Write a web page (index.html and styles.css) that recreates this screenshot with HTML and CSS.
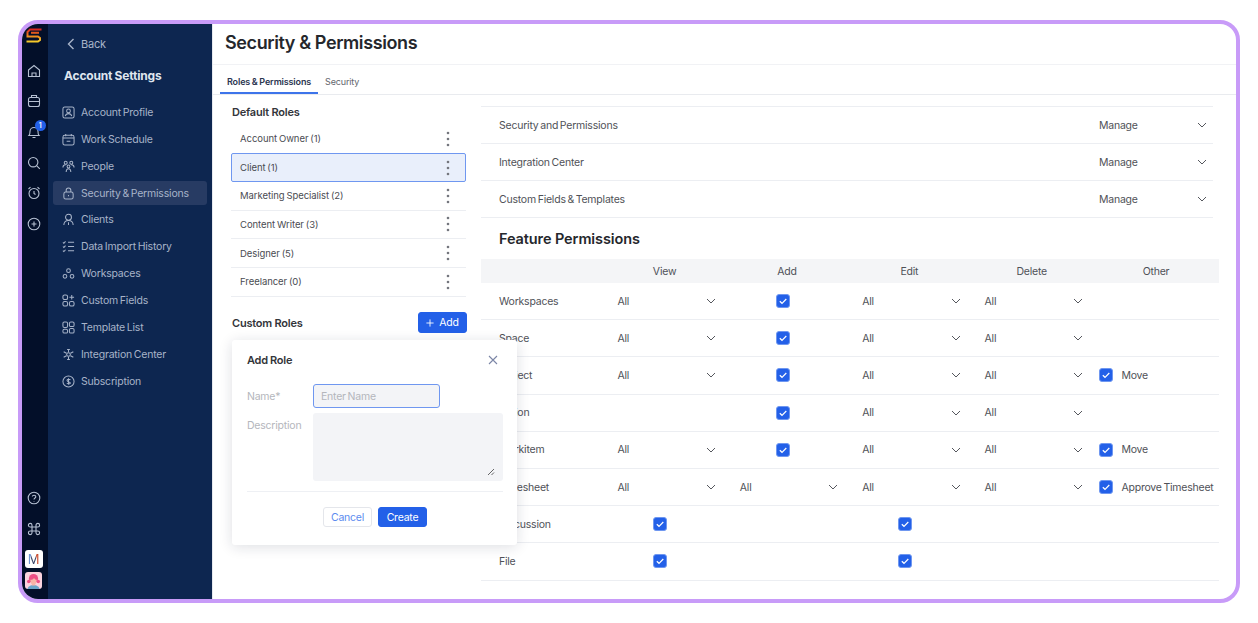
FILE: index.html
```html
<!DOCTYPE html>
<html lang="en">
<head>
<meta charset="utf-8">
<title>Security &amp; Permissions</title>
<link rel="stylesheet" href="styles.css">
</head>
<body>
<svg class="defs" width="0" height="0" aria-hidden="true">
  <defs><linearGradient id="lg" x1="0" y1="0" x2="0" y2="1"><stop offset="0" stop-color="#d8291f"/><stop offset=".55" stop-color="#ee8a1c"/><stop offset="1" stop-color="#f5c92a"/></linearGradient></defs>
  <symbol id="chev" viewBox="0 0 10 10"><path d="M1 3l4 4 4-4" fill="none" stroke="currentColor" stroke-width="1"/></symbol>
  <symbol id="check" viewBox="0 0 14 14"><rect x=".5" y=".5" width="13" height="13" rx="2.5" fill="#2360e8" stroke="#6f97f0"/><path d="M3.8 7.2l2.2 2.1 4.3-4.3" fill="none" stroke="#fff" stroke-width="1.2"/></symbol>
  <symbol id="dots" viewBox="0 0 4 16"><circle cx="2" cy="2" r="1.300"/><circle cx="2" cy="8" r="1.300"/><circle cx="2" cy="14" r="1.300"/></symbol>
</svg>
<div class="frame">
  <aside class="rail">
    <svg class="logo" viewBox="0 0 16 15" width="16" height="15"><path d="M15.500 1.500H4L1.500 4v4.500H12l2 1.500v2l-2 1.500H.5M13 4.800H5" fill="none" stroke="url(#lg)" stroke-width="2"/></svg>
    <svg class="ri" viewBox="0 0 14 14"><path d="M1.500 6L7 1.500 12.500 6v6.500h-11zM5 12.500V9h4v3.500"/></svg>
    <svg class="ri" viewBox="0 0 14 14"><rect x="1.500" y="3.500" width="11" height="9" rx="2"/><path d="M4.500 3.500V1.500h5v2M1.500 7.500h11"/></svg>
    <div class="bell-wrap">
      <svg class="ri" viewBox="0 0 14 14"><path d="M2 10.500c1-1 1-2 1-4a4 4 0 018 0c0 2 0 3 1 4zM5.500 12.500h3"/></svg>
      <span class="badge">1</span>
    </div>
    <svg class="ri" viewBox="0 0 14 14"><circle cx="6.200" cy="6.200" r="4.700"/><path d="M9.800 9.800l3 3"/></svg>
    <svg class="ri" viewBox="0 0 14 14"><circle cx="7" cy="7.500" r="5"/><path d="M7 5v2.500l1.500 1M1.500 3L3.500 1.200M12.500 3l-2-1.800"/></svg>
    <svg class="ri" viewBox="0 0 14 14"><circle cx="7" cy="7" r="5.800"/><path d="M7 4.500v5M4.500 7h5"/></svg>
    <svg class="ri rail-low" viewBox="0 0 14 14"><circle cx="7" cy="7" r="5.800"/><path d="M5.300 5.500C5.500 3.900 8.800 3.900 8.800 5.700 8.800 7 7 7 7 8.500M7 10v.6"/></svg>
    <svg class="ri" viewBox="0 0 14 14"><path d="M5 5h4v4H5zM5 5H3.200A1.800 1.800 0 115 3.200zM9 5V3.200A1.800 1.800 0 1110.800 5zM9 9h1.800A1.800 1.800 0 119 10.800zM5 9v1.800A1.800 1.800 0 113.200 9z"/></svg>
    <div class="org"><span class="m1">M</span></div>
    <div class="avatar"><svg viewBox="0 0 17 17" width="17" height="17"><rect width="17" height="17" fill="#fbd3de"/><path d="M2.500 17c.5-3 3.500-4 6-4s5.500 1 6 4z" fill="#6aa5c9"/><circle cx="8.500" cy="6.500" r="4.600" fill="#ee4f86"/><rect x="6.800" y="10" width="3.400" height="3.500" fill="#f7b5a8"/><circle cx="8.500" cy="9" r="3.200" fill="#f7b5a8"/><path d="M5.200 7.800c1.500 0 3.300-.5 3.800-1.800.5 .8 1.500 1.800 2.800 1.800V4.500H5.200z" fill="#ee4f86"/><circle cx="3.700" cy="9.500" r="1.700" fill="#ee4f86"/><circle cx="13.300" cy="9.500" r="1.700" fill="#ee4f86"/></svg></div>
  </aside>

  <nav class="side">
    <div class="back"><svg viewBox="0 0 8 12" width="8" height="12"><path d="M6.500 1L1.500 6l5 5" fill="none" stroke="currentColor" stroke-width="1.400"/></svg>Back</div>
    <div class="side-title">Account Settings</div>
    <ul class="menu">
      <li class="mi"><svg class="mic" viewBox="0 0 14 14"><rect x="1" y="1" width="12" height="12" rx="2"/><circle cx="7" cy="5.300" r="2"/><path d="M3.500 11c.5-2 2-2.800 3.500-2.800s3 .8 3.500 2.800"/></svg>Account Profile</li>
      <li class="mi"><svg class="mic" viewBox="0 0 14 14"><rect x="1" y="2.500" width="12" height="10.500" rx="2"/><path d="M1 5.500h12M4 1v2.500M10 1v2.500M5 9h4"/></svg>Work Schedule</li>
      <li class="mi"><svg class="mic" viewBox="0 0 14 14"><circle cx="4" cy="3" r="1.600"/><circle cx="10" cy="3" r="1.600"/><circle cx="7" cy="7" r="1.500"/><path d="M1 8c0-2 1-3 3-3M13 8c0-2-1-3-3-3M4.500 13c0-2.500 1-3.700 2.500-3.700S9.500 10.500 9.500 13"/></svg>People</li>
      <li class="mi active"><svg class="mic" viewBox="0 0 14 14"><rect x="2" y="5.500" width="10" height="7.500" rx="2"/><path d="M4.500 5.500V3.500a2.500 2.500 0 015 0v2M7 8.500v1.500"/></svg>Security &amp; Permissions</li>
      <li class="mi"><svg class="mic" viewBox="0 0 14 14"><circle cx="7" cy="4.500" r="3.200"/><path d="M2 13c0-3.500 2-5 5-5s5 1.500 5 5M7 10v3"/></svg>Clients</li>
      <li class="mi"><svg class="mic" viewBox="0 0 14 14"><path d="M1 2.500l1 1 1.800-2M1 7l1 1 1.800-2M1 11.500l1 1 1.800-2M6.500 2.500H13M6.500 7H13M6.500 11.500H13"/></svg>Data Import History</li>
      <li class="mi"><svg class="mic" viewBox="0 0 14 14"><circle cx="7" cy="4" r="2"/><circle cx="3.200" cy="10" r="2"/><circle cx="10.800" cy="10" r="2"/></svg>Workspaces</li>
      <li class="mi"><svg class="mic" viewBox="0 0 14 14"><rect x="1" y="1" width="5" height="5" rx="1.800"/><rect x="1" y="8" width="5" height="5" rx="1.800"/><rect x="8" y="8" width="5" height="5" rx="1.800"/><path d="M10.500 1v5M8 3.500h5"/></svg>Custom Fields</li>
      <li class="mi"><svg class="mic" viewBox="0 0 14 14"><rect x="1" y="1" width="5" height="6" rx="1.500"/><rect x="8" y="1" width="5" height="5" rx="1.500"/><rect x="1" y="9" width="5" height="4" rx="1.500"/><rect x="8" y="8" width="5" height="5" rx="1.500"/></svg>Template List</li>
      <li class="mi"><svg class="mic" viewBox="0 0 14 14"><circle cx="7" cy="7" r="2"/><path d="M7 1v3.500M7 9.500V13M1.800 4l3 1.700M9.200 8.300l3 1.700M1.800 10l3-1.700M9.200 5.700l3-1.700M5.500 1.500h3M5.500 12.500h3"/></svg>Integration Center</li>
      <li class="mi"><svg class="mic" viewBox="0 0 14 14"><circle cx="7" cy="7" r="6"/><path d="M9 5.300C8.400 4.300 5.400 4.300 5.400 6S9 7.500 9 8.700 6 10 5.200 8.700M7 3.500v7"/></svg>Subscription</li>
    </ul>
  </nav>

  <main class="main">
    <header class="head"><h1>Security &amp; Permissions</h1></header>
    <div class="tabs">
      <span class="tab on">Roles &amp; Permissions</span>
      <span class="tab">Security</span>
    </div>
    <div class="body">
      <section class="roles">
        <h2 class="rh">Default Roles</h2>
        <ul class="rlist">
          <li class="role nol">Account Owner (1)<svg class="dots"><use href="#dots"/></svg></li>
          <li class="role sel-role">Client (1)<svg class="dots"><use href="#dots"/></svg></li>
          <li class="role">Marketing Specialist (2)<svg class="dots"><use href="#dots"/></svg></li>
          <li class="role">Content Writer (3)<svg class="dots"><use href="#dots"/></svg></li>
          <li class="role">Designer (5)<svg class="dots"><use href="#dots"/></svg></li>
          <li class="role">Freelancer (0)<svg class="dots"><use href="#dots"/></svg></li>
        </ul>
        <div class="custom">
          <h2 class="rh2">Custom Roles</h2>
          <button class="add"><svg viewBox="0 0 10 10" width="8" height="8"><path d="M5 .5v9M.5 5h9" stroke="#fff" stroke-width="1.100"/></svg>Add</button>
        </div>
      </section>
      <section class="perms">
        <div class="acc first"><span>Security and Permissions</span><span class="mg">Manage</span><svg class="ch"><use href="#chev"/></svg></div>
        <div class="acc"><span>Integration Center</span><span class="mg">Manage</span><svg class="ch"><use href="#chev"/></svg></div>
        <div class="acc"><span>Custom Fields &amp; Templates</span><span class="mg">Manage</span><svg class="ch"><use href="#chev"/></svg></div>
        <h2 class="fp">Feature Permissions</h2>
        <div class="table">
          <div class="thead"><span></span><span>View</span><span>Add</span><span>Edit</span><span>Delete</span><span>Other</span></div>
          <div class="tr"><span class="lbl">Workspaces</span><span class="s">All<svg class="ch"><use href="#chev"/></svg></span><span class="c"><svg class="cb"><use href="#check"/></svg></span><span class="s">All<svg class="ch"><use href="#chev"/></svg></span><span class="s">All<svg class="ch"><use href="#chev"/></svg></span><span></span></div>
          <div class="tr"><span class="lbl">Space</span><span class="s">All<svg class="ch"><use href="#chev"/></svg></span><span class="c"><svg class="cb"><use href="#check"/></svg></span><span class="s">All<svg class="ch"><use href="#chev"/></svg></span><span class="s">All<svg class="ch"><use href="#chev"/></svg></span><span></span></div>
          <div class="tr"><span class="lbl">Project</span><span class="s">All<svg class="ch"><use href="#chev"/></svg></span><span class="c"><svg class="cb"><use href="#check"/></svg></span><span class="s">All<svg class="ch"><use href="#chev"/></svg></span><span class="s">All<svg class="ch"><use href="#chev"/></svg></span><span class="o"><svg class="cb"><use href="#check"/></svg>Move</span></div>
          <div class="tr"><span class="lbl">Action</span><span></span><span class="c"><svg class="cb"><use href="#check"/></svg></span><span class="s">All<svg class="ch"><use href="#chev"/></svg></span><span class="s">All<svg class="ch"><use href="#chev"/></svg></span><span></span></div>
          <div class="tr"><span class="lbl">Workitem</span><span class="s">All<svg class="ch"><use href="#chev"/></svg></span><span class="c"><svg class="cb"><use href="#check"/></svg></span><span class="s">All<svg class="ch"><use href="#chev"/></svg></span><span class="s">All<svg class="ch"><use href="#chev"/></svg></span><span class="o"><svg class="cb"><use href="#check"/></svg>Move</span></div>
          <div class="tr"><span class="lbl">Timesheet</span><span class="s">All<svg class="ch"><use href="#chev"/></svg></span><span class="s">All<svg class="ch"><use href="#chev"/></svg></span><span class="s">All<svg class="ch"><use href="#chev"/></svg></span><span class="s">All<svg class="ch"><use href="#chev"/></svg></span><span class="o"><svg class="cb"><use href="#check"/></svg>Approve Timesheet</span></div>
          <div class="tr"><span class="lbl">Discussion</span><span class="c"><svg class="cb"><use href="#check"/></svg></span><span></span><span class="c"><svg class="cb"><use href="#check"/></svg></span><span></span><span></span></div>
          <div class="tr"><span class="lbl">File</span><span class="c"><svg class="cb"><use href="#check"/></svg></span><span></span><span class="c"><svg class="cb"><use href="#check"/></svg></span><span></span><span></span></div>
        </div>
      </section>
      <div class="modal">
        <div class="m-head"><span class="m-title">Add Role</span><svg class="x" viewBox="0 0 10 10" width="10" height="10"><path d="M1 1l8 8M9 1l-8 8" stroke="#7b86a6" stroke-width="1.100"/></svg></div>
        <div class="field"><label class="fl">Name*</label><div class="inp">Enter Name</div></div>
        <div class="field"><label class="fl">Description</label><div class="ta"><svg viewBox="0 0 8 8" width="8" height="8"><path d="M1 7l6-6M4.500 7L7 4.500" stroke="#555" stroke-width=".9"/></svg></div></div>
        <div class="m-foot"><button class="cancel">Cancel</button><button class="create">Create</button></div>
      </div>
    </div>
  </main>
</div>
</body>
</html>
```
FILE: styles.css
```css
* { box-sizing: border-box; }
html, body { margin: 0; height: 100%; overflow: hidden; background: #fff; }
body { font-family: "Inter", "Liberation Sans", sans-serif; font-size: 10.5px; color: #4f5157; letter-spacing: -0.22px; word-spacing: -1px; }
ul { list-style: none; margin: 0; padding: 0; }
h1, h2 { margin: 0; }
button { font-family: inherit; letter-spacing: inherit; cursor: pointer; }
.defs { position: absolute; }

.frame { display: flex; width: 1222px; height: 583px; margin: 20px 0 0 18px; border: 4px solid #c89bf8; border-radius: 20px; overflow: hidden; background: #fff; }

.rail { width: 26px; flex: none; background: #030f29; display: flex; flex-direction: column; align-items: center; padding: 4px 3px 10px 0; gap: 16.700px; }
.logo { margin-bottom: 4px; flex: none; }
.ri { width: 14px; height: 14px; display: block; flex: none; fill: none; stroke: #b6c0d2; stroke-width: 1.100; }
.rail-low { margin-top: auto; }
.bell-wrap { position: relative; height: 14px; }
.badge { position: absolute; top: -5px; left: 8px; width: 11px; height: 11px; border-radius: 50%; background: #2360e8; color: #fff; font-size: 7px; line-height: 11px; text-align: center; font-weight: 600; }
.org { width: 18px; height: 18px; flex: none; background: #fff; border-radius: 3px; display: flex; align-items: center; justify-content: center; margin-top: -2.700px; margin-bottom: -12.700px; }
.m1 { font-size: 13px; line-height: 1; font-weight: 400; color: transparent; background: linear-gradient(90deg, #6f95d2 0 25%, #3b4668 25% 72%, #c9492c 72%); -webkit-background-clip: text; background-clip: text; }
.avatar { width: 17px; height: 17px; flex: none; border-radius: 3px; overflow: hidden; }
.avatar svg { display: block; }

.side { width: 164px; flex: none; background: #0d2650; color: #a8b4c9; padding-top: 12px; }
.back { display: flex; align-items: center; gap: 6px; height: 16px; padding-left: 19px; font-size: 11px; }
.side-title { margin-top: 16px; height: 16px; line-height: 16px; padding-left: 16px; font-size: 12px; font-weight: 700; color: #dfe5ee; letter-spacing: -0.17px; word-spacing: -0.5px; }
.menu { margin-top: 16.400px; display: flex; flex-direction: column; gap: 2.900px; }
.mi { margin: 0 5px; height: 24px; border-radius: 3px; display: flex; align-items: center; gap: 6px; padding-left: 9px; font-size: 10.500px; letter-spacing: -0.2px; }
.mi.active { background: #273b63; }
.mic { width: 13px; height: 13px; flex: none; fill: none; stroke: #a8b4c9; stroke-width: 1.100; }

.main { flex: 1; min-width: 0; display: flex; flex-direction: column; border-left: 1px solid #e6e9ef; }
.head { height: 41px; flex: none; padding: 0 12px 4px; display: flex; align-items: center; border-bottom: 1px solid #f1f2f5; }
h1 { font-size: 18px; font-weight: 600; color: #25272c; letter-spacing: -0.4px; word-spacing: 0; }
.tabs { height: 30px; flex: none; border-bottom: 1px solid #e9ebef; display: flex; gap: 7px; padding-left: 7px; font-size: 9px; letter-spacing: -0.15px; word-spacing: -0.4px; }
.tab { height: 29px; line-height: 34px; color: #63666d; }
.tab.on { color: #2b3550; font-weight: 600; padding: 0 7px; border-bottom: 2px solid #3d74ea; }

.body { position: relative; flex: 1; min-height: 0; display: flex; padding-left: 18px; gap: 15px; }
.roles { width: 235px; flex: none; }
.rh { font-size: 11px; font-weight: 600; color: #33353a; height: 29.500px; line-height: 35px; padding-left: 1px; word-spacing: 0; }
.role { height: 28.700px; display: flex; align-items: center; justify-content: space-between; padding: 0 16px 0 9px; border-bottom: 1px solid #eceef2; font-size: 9.500px; color: #4a4c52; letter-spacing: -0.05px; word-spacing: -0.8px; }
.nol { border-bottom: 0; }
.sel-role { background: #e9effb; border: 1px solid #6f97f0; border-radius: 2px; padding-left: 8px; padding-right: 15px; }
.dots { width: 4px; height: 16px; fill: #74767d; flex: none; }
.custom { margin-top: 15.500px; display: flex; align-items: center; justify-content: space-between; padding-left: 1px; }
.rh2 { font-size: 11px; font-weight: 600; color: #33353a; word-spacing: 0; }
.add { width: 49px; height: 21px; margin-right: -1px; border: 1px solid #2360e8; border-radius: 3px; background: #2360e8; color: #fff; font-size: 10.500px; display: flex; align-items: center; justify-content: center; gap: 5px; padding: 0; }

.perms { width: 738px; flex: none; padding-top: 11px; }
.acc { width: 732px; height: 37px; display: flex; align-items: center; padding: 0 6px 0 18px; border-bottom: 1px solid #eceef2; }
.acc.first { height: 38px; border-top: 1px solid #eceef2; }
.mg { margin-left: auto; width: 98px; }
.ch { width: 10px; height: 10px; color: #55575d; flex: none; }
.fp { height: 41px; line-height: 42px; padding-left: 18px; font-size: 14.500px; font-weight: 600; color: #25272c; letter-spacing: -0.1px; word-spacing: 0; }
.thead, .tr { display: grid; grid-template-columns: repeat(5, 122.400px) 1fr; align-items: center; }
.thead { height: 24px; background: #f4f5f7; text-align: center; }
.tr { height: 37.200px; border-bottom: 1px solid #eceef2; }
.lbl { padding-left: 18px; }
.s { display: flex; align-items: center; justify-content: space-between; padding: 0 10px 0 14px; }
.c { padding-left: 50px; display: flex; }
.o { display: flex; align-items: center; gap: 8px; padding-left: 6.500px; white-space: nowrap; }
.cb { width: 14px; height: 14px; flex: none; }

.modal { position: absolute; left: 19px; top: 245px; width: 285px; height: 205px; background: #fff; border-radius: 3px; box-shadow: 0 2px 14px rgba(20, 30, 60, .14); padding: 0 14px 0 15px; }
.m-head { height: 40px; margin-bottom: 4px; display: flex; align-items: center; justify-content: space-between; padding-right: 5px; }
.m-title { font-size: 11px; font-weight: 600; color: #33353a; word-spacing: -0.5px; }
.field { display: flex; margin-bottom: 5px; }
.m-head + .field { margin-bottom: 5px; height: 24px; }
.field + .field { margin-top: -0.500px; }
.fl { width: 66px; flex: none; color: #b4b6bc; line-height: 25px; }
.inp { width: 127px; height: 24px; background: #f3f4f7; border: 1px solid #6f97f0; border-radius: 3px; color: #b4b6bc; line-height: 23px; padding-left: 7px; }
.ta { width: 190px; height: 68px; background: #f3f4f7; border-radius: 3px; display: flex; align-items: flex-end; justify-content: flex-end; padding: 0 8px 5px 0; }
.m-foot { margin-top: 10.500px; border-top: 1px solid #eef0f4; padding: 15px 0 0 76px; display: flex; gap: 6px; }
.cancel, .create { width: 49px; height: 20px; border-radius: 3px; font-size: 10.500px; padding: 0; }
.cancel { background: #fff; border: 1px solid #e4e6eb; color: #5b8bef; }
.create { background: #2360e8; border: 1px solid #2360e8; color: #fff; }
```
